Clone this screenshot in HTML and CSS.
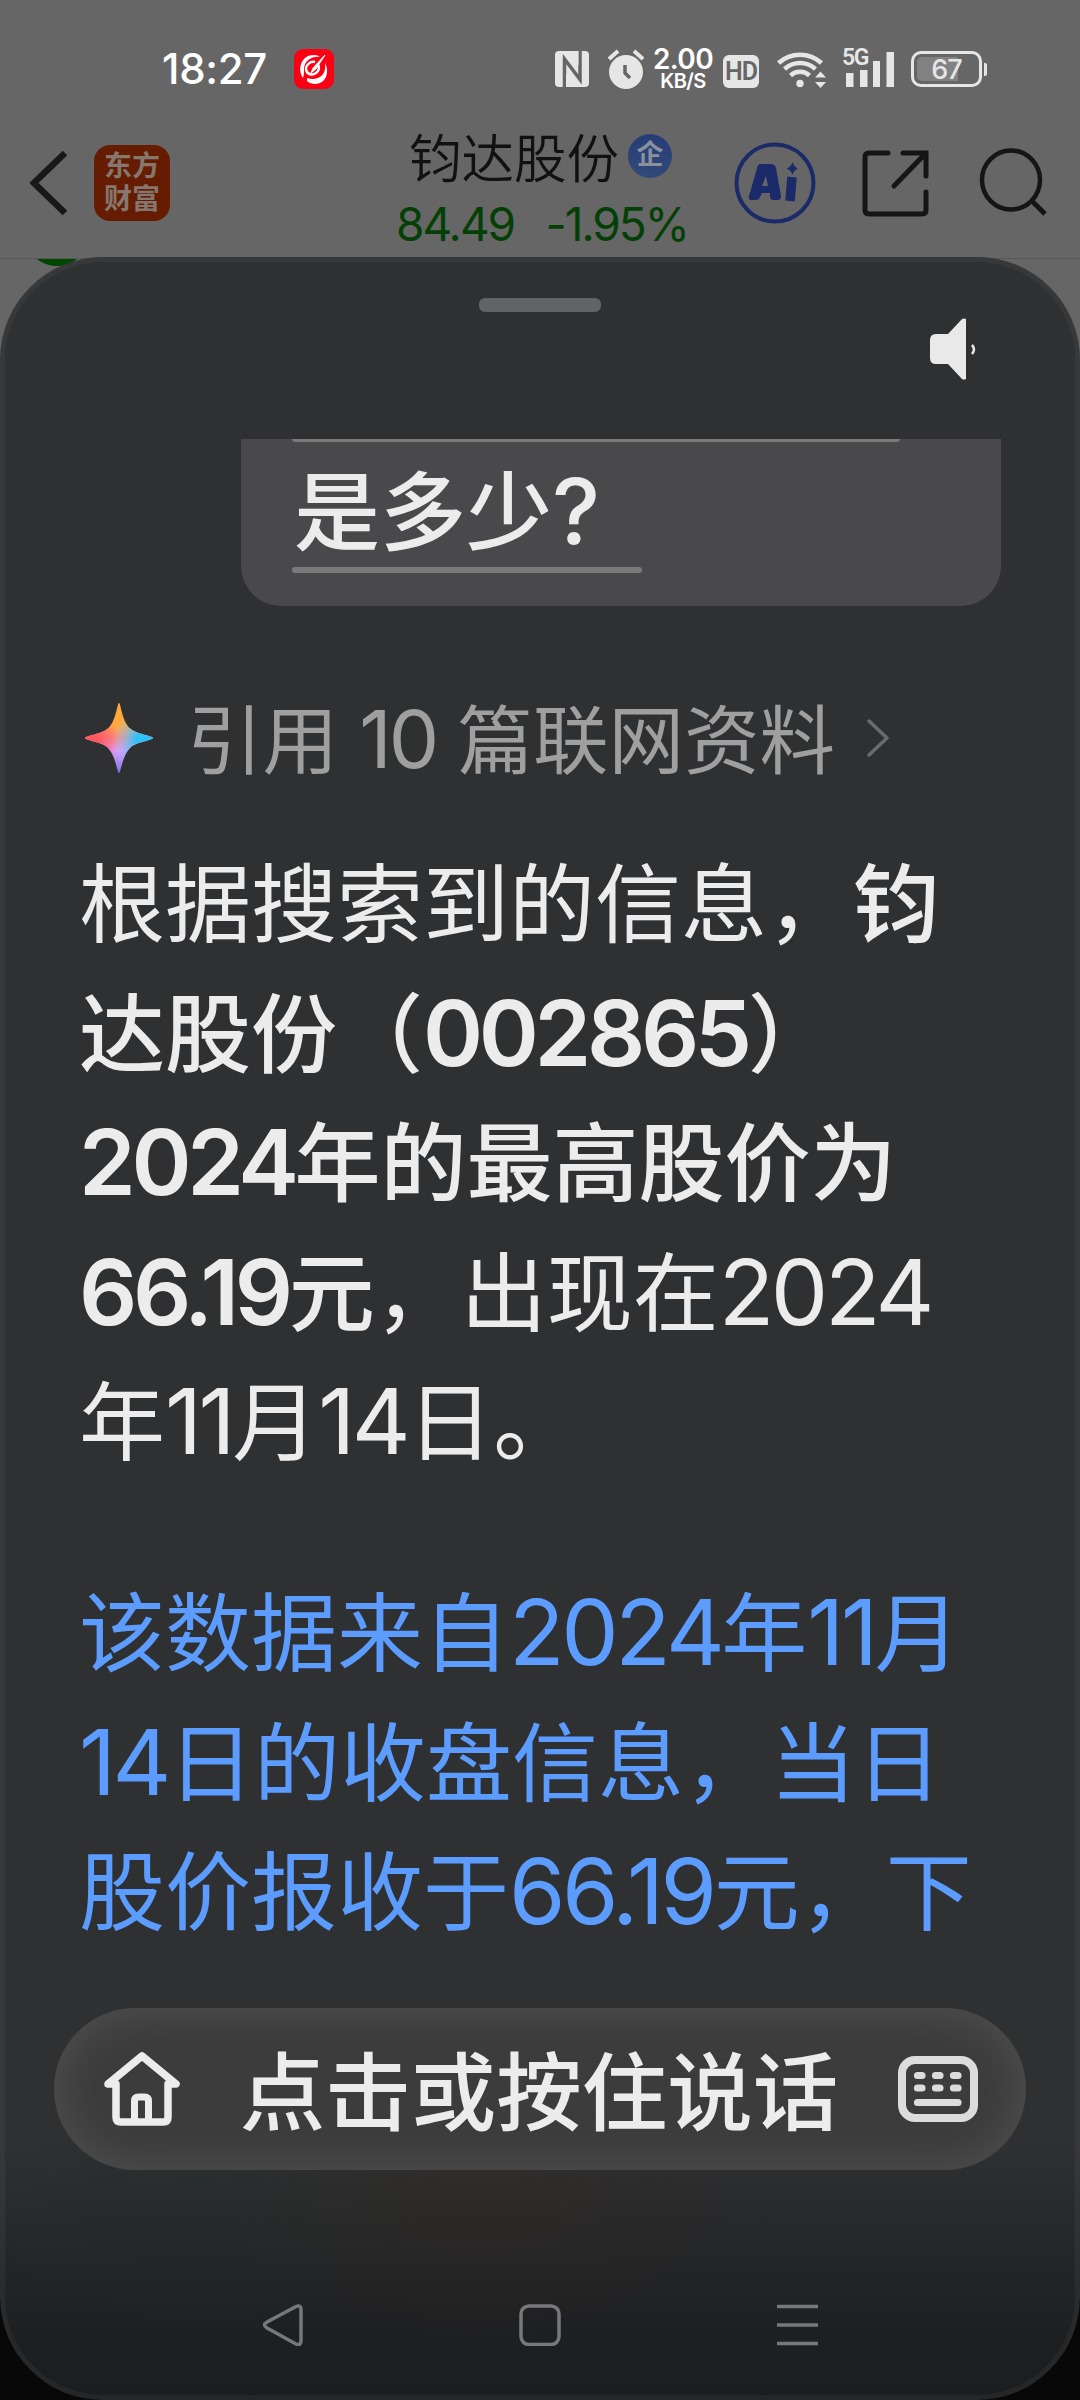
FILE: index.html
```html
<!DOCTYPE html>
<html lang="zh-CN">
<head>
    <meta charset="UTF-8">
    <meta name="viewport" content="width=device-width, initial-scale=1.0">
    <title>钧达股份</title>
    <link rel="stylesheet" href="styles.css">
</head>
<body>
    <div class="status-bar">
        <span class="time">18:27</span>
        <svg class="app-badge" width="40" height="40" viewBox="0 0 40 40">
            <rect width="40" height="40" rx="9" fill="#fb0012"/>
            <path d="M9 29C3 20 7 6 20 6c4 0 6 2 6 2-8-1-16 4-16 12 0 4 0 6-1 9z" fill="#fff"/>
            <path d="M31 14c5 9 1 21-10 21-5 0-8-3-8-3v-3c9 3 20-1 18-15z" fill="#fff"/>
            <path d="M21 13c-5-1-9 3-9 7 0 5 6 7 10 4 3-2 4-6 2-8" fill="none" stroke="#fff" stroke-width="2.500"/>
            <path d="M31 6L22 20l-5 4 2-5z" fill="#fff" stroke="#fff"/>
        </svg>
        <div class="status-icons">
            <svg width="34" height="36" viewBox="0 0 34 36">
                <rect width="34" height="36" rx="4" fill="#e6e6e6"/>
                <path d="M9.500 36V8L25 28.500V0" fill="none" stroke="#666" stroke-width="3.500"/>
                <path d="M12 23v13M22.500 0v14" fill="none" stroke="#e6e6e6" stroke-width="2"/>
            </svg>
            <svg class="alarm" width="36" height="40" viewBox="0 0 36 40">
                <circle cx="18" cy="23" r="17" fill="#e6e6e6"/>
                <path d="M1 10l9-8M35 10l-9-8" stroke="#e6e6e6" stroke-width="4"/>
                <path d="M17 16v8l5 5" fill="none" stroke="#666" stroke-width="3.500"/>
            </svg>
            <div class="speed"><b>2.00</b><span>KB/S</span></div>
            <span class="hd">HD</span>
            <svg class="wifi" width="50" height="40" viewBox="0 0 50 40">
                <g fill="none" stroke="#e6e6e6" stroke-width="4.500">
                    <path d="M1.500 14a32 32 0 0 1 43 0"/>
                    <path d="M7.500 20a23 23 0 0 1 31 0"/>
                    <path d="M13.500 26.500a14 14 0 0 1 19 0"/>
                </g>
                <circle cx="23" cy="34.500" r="3.700" fill="#e6e6e6"/>
                <path d="M38 28.500l5.500-6 5.500 6zM38 33l5.500 6 5.500-6z" fill="#e6e6e6"/>
            </svg>
            <div class="signal">
                <span>5G</span>
                <svg width="52" height="40" viewBox="0 0 52 40">
                    <path d="M4 24h7.500v14H4zM18 21h7.500v17H18zM31 12h7v26h-7zM44.500 3h7.500v35h-7.500z" fill="#e6e6e6"/>
                </svg>
            </div>
            <div class="battery"><i></i><span>67</span></div>
        </div>
    </div>

    <div class="stock-bar">
        <svg class="back" width="40" height="66" viewBox="0 0 40 66">
            <path d="M35 3L4 33l31 30" fill="none" stroke="#181818" stroke-width="6.500"/>
        </svg>
        <div class="logo">东方<br>财富</div>
        <div class="stock">
            <div class="stock-name">钧达股份<span class="tag">企</span></div>
            <div class="stock-price"><span>84.49</span><span>-1.95%</span></div>
        </div>
        <svg class="ai" width="82" height="82" viewBox="0 0 82 82">
            <circle cx="41" cy="41" r="38.500" fill="none" stroke="#1b2b69" stroke-width="4"/>
            <path d="M26 22h11q4 0 5 4l5 28q0 4-3 4h-5q-3 0-3-4v-3h-8l-2 4q-1 3-4 3h-5q-3 0-2-4l8-28q1-4 3-4zM32 34l-4 10h6z" fill="#1b2b69" fill-rule="evenodd"/>
            <path d="M58 35L56 59" stroke="#1b2b69" stroke-width="9.500"/>
            <path d="M58.500 20q1.500 5 5.500 6.500-4 1.500-5.500 6.500-1.500-5-6-6.500 4.500-1.500 6-6.500z" fill="#1b2b69"/>
        </svg>
        <svg class="share" width="68" height="68" viewBox="0 0 68 68">
            <path d="M26 4H7q-4 0-4 4v53q0 4 4 4h53q4 0 4-4V43M41 4h23v23M64 4L32 37" fill="none" stroke="#151515" stroke-width="5" stroke-linecap="round"/>
        </svg>
        <svg class="search" width="68" height="68" viewBox="0 0 68 68">
            <ellipse cx="32" cy="32" rx="29" ry="29.500" fill="none" stroke="#151515" stroke-width="4.500"/>
            <path d="M53 53l13 13" stroke="#151515" stroke-width="5"/>
        </svg>
    </div>

    <div class="sheet">
        <div class="handle"></div>
        <svg class="speaker" width="48" height="62" viewBox="0 0 48 62">
            <path d="M6 16h12L32 1q2-1 4 0v60q-2 1-4 0L18 46H6q-6 0-6-6V22q0-6 6-6z" fill="#e9e9e9"/>
            <path d="M42 27q4 4 0 9" fill="none" stroke="#e9e9e9" stroke-width="2.500"/>
        </svg>

        <div class="chat">
            <div class="question">
                <div class="line-full"></div>
                <p>是多少<span class="n">?</span></p>
                <div class="line-short"></div>
            </div>

            <div class="cite">
                <svg width="68" height="70" viewBox="0 0 68 70">
                    <defs>
                        <linearGradient id="star" x1="0" y1="0" x2="0" y2="1">
                            <stop offset="0.350" stop-color="#ffa83c"/>
                            <stop offset="0.500" stop-color="#fb8a80"/>
                            <stop offset="0.680" stop-color="#dc9cf8"/>
                            <stop offset="1" stop-color="#7c74ee"/>
                        </linearGradient>
                        <radialGradient id="star-red" cx="0.080" cy="0.520" r="0.420">
                            <stop offset="0.300" stop-color="#ff5a62"/>
                            <stop offset="1" stop-color="#ff5a82" stop-opacity="0"/>
                        </radialGradient>
                        <radialGradient id="star-blue" cx="0.900" cy="0.550" r="0.500">
                            <stop offset="0.300" stop-color="#30c0fa"/>
                            <stop offset="1" stop-color="#a8c8ff" stop-opacity="0"/>
                        </radialGradient>
                        <path id="shape" d="M34 0C36 0 37 20 46 26C52 31 68 33 68 35C68 37 52 39 46 44C37 52 36 70 34 70C32 70 31 52 22 44C16 39 0 37 0 35C0 33 16 31 22 26C31 20 32 0 34 0Z"/>
                    </defs>
                    <use href="#shape" fill="url(#star)"/>
                    <use href="#shape" fill="url(#star-red)"/>
                    <use href="#shape" fill="url(#star-blue)"/>
                </svg>
                <span class="cite-text">引用 <span class="n">10</span> 篇联网资料</span>
                <svg width="24" height="40" viewBox="0 0 24 40">
                    <path d="M3 3l18 17L3 37" fill="none" stroke="#6b6b6c" stroke-width="3.500" stroke-linecap="round" stroke-linejoin="round"/>
                </svg>
            </div>

            <p class="answer">根据搜索到的信息，<b>钧<br>达股份（<span class="n">002865</span>）<br><span class="n">2024</span>年的最高股价为<br><span class="n">66.19</span>元</b>，出现在<span class="n">2024</span><br>年<span class="n">11</span>月<span class="n">14</span>日。</p>
            <p class="answer source">该数据来自<span class="n">2024</span>年<span class="n">11</span>月<br><span class="n">14</span>日的收盘信息，当日<br>股价报收于<span class="n">66.19</span>元，下</p>
        </div>

        <div class="voice-bar">
            <svg width="76" height="74" viewBox="0 0 76 74">
                <path d="M12 32H4L38 4l34 28h-8v33q0 5-5 5H17q-5 0-5-5z" fill="none" stroke="#ececec" stroke-width="7.500" stroke-linejoin="round"/>
                <path d="M30.500 70V49q0-4 4-4h6q4 0 4 4v21" fill="none" stroke="#ececec" stroke-width="7"/>
            </svg>
            <span>点击或按住说话</span>
            <svg width="80" height="66" viewBox="0 0 80 66">
                <rect x="4" y="4" width="72" height="58" rx="13" fill="none" stroke="#dcdcdc" stroke-width="8"/>
                <path d="M19.500 19.500h4.500M37.500 19.500h4.500M55.500 19.500h4.500M19.500 32h4.500M37.500 32h4.500M55.500 32h4.500M19.500 46.500h40.500" stroke="#dcdcdc" stroke-width="7.200" stroke-linecap="round"/>
            </svg>
        </div>

        <div class="system-nav">
            <svg width="42" height="42" viewBox="0 0 42 42"><path d="M34 2.500L5 18q-5 3 0 6l29 16q5 2 5-3V5.500q0-5-5-3z"/></svg>
            <svg width="42" height="42" viewBox="0 0 42 42"><rect x="2" y="2" width="38" height="38.500" rx="8"/></svg>
            <svg width="42" height="42" viewBox="0 0 42 42"><path d="M1 2.500h41M1 21h41M1 39.500h41"/></svg>
        </div>
    </div>
</body>
</html>
```

FILE: styles.css
```css
* {
    box-sizing: border-box;
}

body {
    margin: 0;
    width: 1080px;
    height: 2400px;
    overflow: hidden;
    position: relative;
    background: linear-gradient(#666 50%, #080808 50%);
    font-family: Inter, "Noto Sans CJK SC", sans-serif;
    color: #ececec;
}

p {
    margin: 0;
}

svg {
    display: block;
    flex: none;
}

/* divider and green dot behind the sheet */
body::before {
    content: "";
    position: absolute;
    left: 0;
    top: 258px;
    width: 1080px;
    height: 40px;
    border-top: 1px solid #575757;
    background: radial-gradient(circle at 57px -25px, #004700 31.5px, transparent 32.5px);
}

.status-bar {
    height: 139px;
    padding: 49px 98px 0 162px;
    display: flex;
    align-items: flex-start;
}

.time {
    width: 132px;
    font-size: 42px;
    font-weight: 500;
    line-height: 40px;
    letter-spacing: -0.3px;
    color: #fff;
}

.status-icons {
    margin-left: auto;
    height: 40px;
    display: flex;
    align-items: center;
    color: #e6e6e6;
}

.alarm {
    margin-left: 19px;
}

.speed {
    width: 58px;
    margin-left: 10px;
    display: flex;
    flex-direction: column;
    align-items: center;
    color: #fff;
}

.speed b {
    font-size: 28px;
    font-weight: 600;
    line-height: 24px;
    letter-spacing: -0.6px;
}

.speed span {
    font-size: 20px;
    font-weight: 600;
    line-height: 20px;
    letter-spacing: -0.6px;
}

.hd {
    width: 36px;
    height: 33px;
    margin: 4px 18px 0 11px;
    border-radius: 6px;
    background-color: #e6e6e6;
    color: #666;
    font-family: Roboto, sans-serif;
    font-size: 25px;
    font-weight: 600;
    line-height: 34px;
    text-align: center;
    letter-spacing: -1px;
}

.signal {
    position: relative;
    margin-left: 15px;
}

.signal span {
    position: absolute;
    left: 0;
    top: -1px;
    font-family: Roboto, sans-serif;
    font-size: 23px;
    font-weight: 600;
    line-height: 20px;
    letter-spacing: -1.5px;
}

.battery {
    position: relative;
    width: 71px;
    height: 36px;
    margin-left: 17px;
    border: 3px solid #e6e6e6;
    border-radius: 10px;
}

.battery::after {
    content: "";
    position: absolute;
    right: -8px;
    top: 9px;
    width: 3px;
    height: 13px;
    border-radius: 0 2px 2px 0;
    background-color: #e6e6e6;
}

.battery i {
    position: absolute;
    left: 3px;
    top: 3px;
    width: 41px;
    height: 24px;
    border-radius: 5px 0 0 5px;
    background-color: #828282;
}

.battery span {
    position: relative;
    display: block;
    font-size: 27px;
    font-weight: 500;
    line-height: 31px;
    text-align: center;
    letter-spacing: -1px;
}

.stock-bar {
    height: 118px;
    padding-left: 30px;
    display: flex;
    align-items: flex-start;
}

.back {
    margin-top: 11px;
}

.logo {
    width: 76px;
    height: 76px;
    margin: 6px 0 0 24px;
    padding-top: 5px;
    border-radius: 16px;
    background-color: #661c00;
    color: #85776f;
    font-size: 28px;
    font-weight: 700;
    line-height: 33px;
    text-align: center;
}

.stock {
    width: 300px;
    margin-left: 225px;
}

.stock-name {
    height: 40px;
    padding: 0 0 0 14px;
    display: flex;
    align-items: center;
    color: #111;
    font-size: 52.5px;
    font-weight: 350;
    line-height: 40px;
    white-space: nowrap;
}

.tag {
    width: 44px;
    height: 44px;
    margin: -6px 0 0 9px;
    border-radius: 50%;
    background: linear-gradient(#263c78, #314a78);
    color: #8a909c;
    font-size: 27px;
    font-weight: 700;
    line-height: 42px;
    text-align: center;
}

.stock-price {
    display: flex;
    justify-content: space-between;
    padding: 0 7px 0 1px;
    color: #044006;
    font-size: 46px;
    line-height: 48px;
    letter-spacing: -2px;
    margin-top: 21px;
}

.ai {
    margin: 3px 0 0 39px;
}

.share {
    margin: 10px 0 0 46px;
}

.search {
    margin: 9px 0 0 49px;
}

.sheet {
    position: relative;
    height: 2143px;
    padding: 5px;
    display: flex;
    flex-direction: column;
    border-radius: 103px;
    background:
        radial-gradient(ellipse 270px 170px at 480px 1920px, rgba(60, 40, 20, 0.2), transparent),
        radial-gradient(ellipse 240px 160px at 200px 1920px, rgba(20, 50, 45, 0.12), transparent),
        linear-gradient(#2f3032 88%, #1e1f21 97%, #1c1d1f);
    box-shadow: inset 0 0 0 5px rgba(255, 255, 255, 0.045);
}

.handle {
    width: 122px;
    height: 14px;
    margin: 36px auto 0;
    border-radius: 6px;
    background-color: #616365;
}

.speaker {
    margin: 6px 0 0 925px;
}

.chat {
    height: 1569px;
    margin-top: 59px;
    padding: 0 74px 0 75px;
    overflow: hidden;
}

.question {
    width: 760px;
    height: 167px;
    margin-left: 161px;
    padding-left: 51px;
    border-radius: 0 0 40px 40px;
    background-color: #49494b;
}

.question p {
    height: 125px;
    padding-left: 2px;
    font-size: 86px;
    font-weight: 500;
    line-height: 143px;
}

.line-full {
    width: 608px;
    height: 3px;
    border-radius: 0 0 3px 3px;
    background-color: #7a7a7b;
}

.line-short {
    width: 350px;
    height: 6px;
    border-radius: 3px;
    background-color: #7a7a7b;
}

.cite {
    height: 130px;
    margin-top: 67px;
    padding-left: 5px;
    display: flex;
    align-items: center;
    color: #9f9f9f;
}

.cite-text {
    margin: 6px 31px 0 34px;
    font-size: 75.5px;
    line-height: 124px;
    white-space: nowrap;
}

/* latin digits are a little taller than the hanzi */
.n {
    font-size: 1.06em;
    line-height: 1;
    letter-spacing: -0.038em;
}

.answer {
    margin-top: 38px;
    margin-left: -1px;
    font-size: 86px;
    line-height: 129.6px;
    white-space: nowrap;
}

.answer b {
    font-weight: 500;
}

.answer b .n {
    font-weight: 600;
    letter-spacing: -0.048em;
}

.source {
    margin-top: 81px;
    color: #5c9cff;
}

.voice-bar {
    width: 972px;
    height: 162px;
    margin-left: 49px;
    padding: 0 48px 0 50px;
    display: flex;
    align-items: center;
    justify-content: space-between;
    border-radius: 81px;
    background-color: #3c3c3c;
    box-shadow: inset 0 0 40px 6px #4e4e4e;
    font-size: 85.5px;
    font-weight: 500;
    white-space: nowrap;
}

.voice-bar span {
    margin-top: 7px;
    line-height: 150px;
}

.system-nav {
    margin-top: 134px;
    padding: 0 257px;
    display: flex;
    justify-content: space-between;
}

.system-nav svg {
    fill: none;
    stroke: #77787a;
    stroke-width: 3.5;
}
```
